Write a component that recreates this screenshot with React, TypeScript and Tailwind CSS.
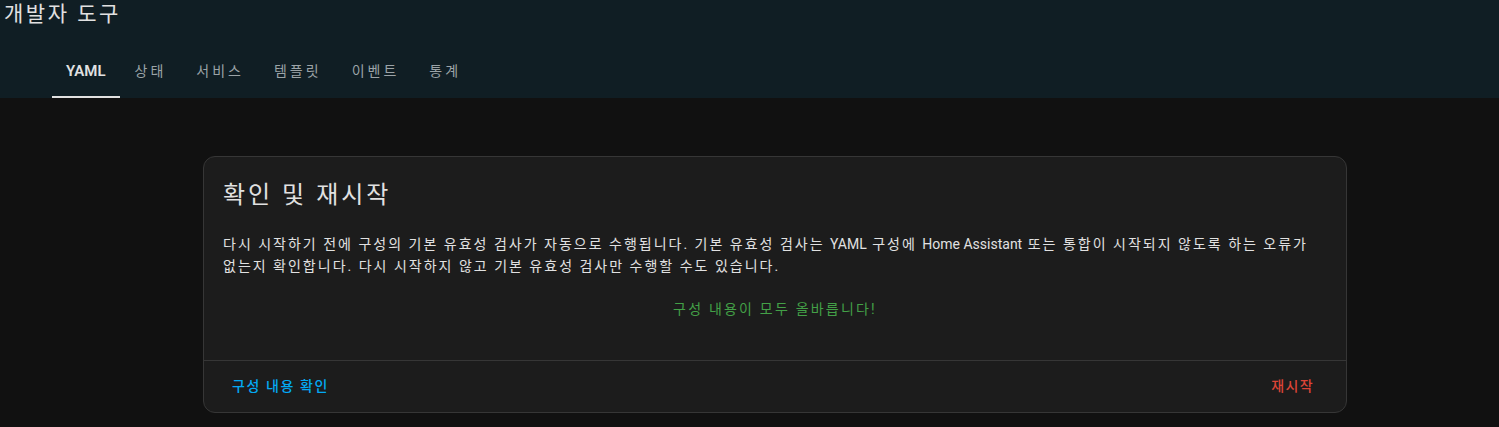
const FONT = "font-['Roboto','Noto_Sans_CJK_KR',sans-serif]";

const TABS = ["YAML", "상태", "서비스", "템플릿", "이벤트", "통계"];

function Tab({ label, active }: { label: string; active?: boolean }) {
  return (
    <div
      className={`relative flex h-[50px] items-center pb-[4px] text-[14px] ${
        active ? "px-[14px] text-[15px] font-semibold text-[#e1e1e1]" : "px-[15px] tracking-[3px] text-[#9ba3a7]"
      }`}
    >
      {label}
      {active && <div className="absolute bottom-0 left-0 right-0 h-[2px] bg-[#e1e1e1]" />}
    </div>
  );
}

const Latin = ({ children }: { children: string }) => <span className="tracking-normal">{children}</span>;

export default function App() {
  return (
    <div className={`${FONT} min-h-[427px] bg-[#111111]`}>
      {/* header */}
      <div className="bg-[#101e24]">
        <div className="flex h-[48px] items-start pl-[4px] pt-[1px] text-[21px] leading-[26px] tracking-[2.5px] text-[#e1e1e1]">
          개발자 도구
        </div>
        <div className="flex pl-[52px]">
          {TABS.map((t, i) => (
            <Tab key={t} label={t} active={i === 0} />
          ))}
        </div>
      </div>

      {/* card */}
      <div className="pt-[58px]">
        <div className="ml-[203px] w-[1144px] rounded-xl border border-[#363636] bg-[#1c1c1c]">
          <div className="px-[19px] pt-[20px] text-[24px] leading-[36px] tracking-[3px] text-[#e1e1e1]">확인 및 재시작</div>
          <div className="px-[19px] pt-[20px] pb-[40px]">
            <p className="text-[14px] leading-[22px] tracking-[2px] text-[#e1e1e1]">
              다시 시작하기 전에 구성의 기본 유효성 검사가 자동으로 수행됩니다. 기본 유효성 검사는 <Latin>YAML</Latin>{" "}
              구성에 <Latin>Home Assistant</Latin> 또는 통합이 시작되지 않도록 하는 오류가 없는지 확인합니다. 다시
              시작하지 않고 기본 유효성 검사만 수행할 수도 있습니다.
            </p>
            <div className="pt-[21px] text-center text-[14px] leading-[22px] tracking-[2.2px] text-[#43a047]">
              구성 내용이 모두 올바릅니다!
            </div>
          </div>
          <div className="flex h-[52px] items-center justify-between border-t border-[#363636] px-[28px]">
            <span className="text-[14px] font-medium tracking-[1.6px] text-[#03a9f4]">구성 내용 확인</span>
            <span className="mr-[4px] text-[14px] font-medium tracking-[1.4px] text-[#db4437]">재시작</span>
          </div>
        </div>
      </div>
    </div>
  );
}
